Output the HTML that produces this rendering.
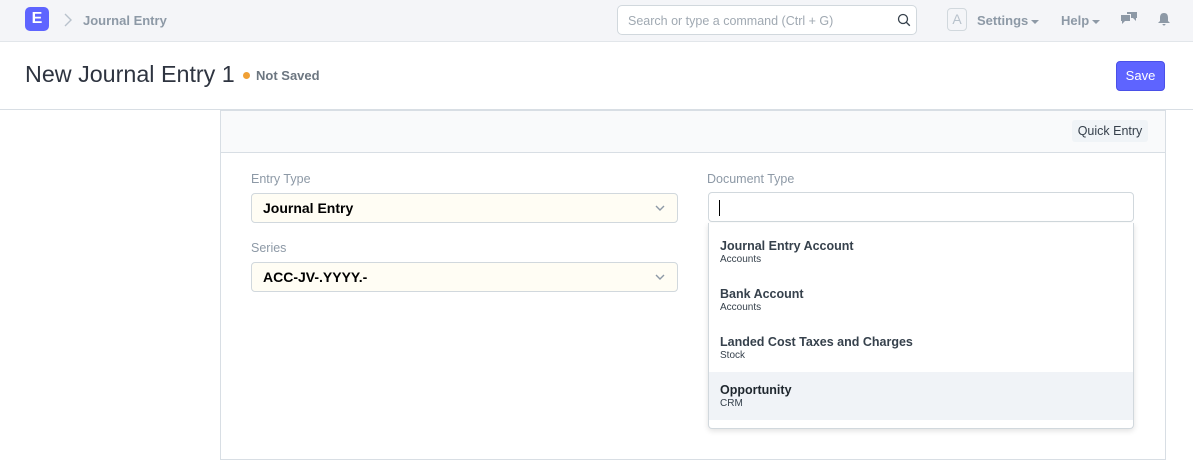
<!DOCTYPE html>
<html><head><style>
*{box-sizing:border-box;margin:0;padding:0}
body{width:1193px;height:467px;overflow:hidden;background:#fff;font-family:"Liberation Sans",sans-serif;position:relative;color:#1f272e}
.abs{position:absolute}
.nav{left:0;top:0;width:1193px;height:42px;background:#f4f5f8;border-bottom:1px solid #e2e6ea}
.logo{left:25px;top:7px;width:24px;height:24px;background:#5e64ff;border-radius:5px;color:#fff;font-weight:bold;font-size:16px;text-align:center;line-height:24px}
.gray{color:#8d99a6;font-weight:bold;font-size:13px}
.search{left:617px;top:5px;width:300px;height:30px;border:1px solid #d1d8dd;border-radius:5px;background:#fff;font-size:12.5px;color:#a0a9b2;padding:8px 10px}
.av{left:947px;top:8px;width:20px;height:23px;border:1px solid #d1d8dd;border-radius:4px;color:#b8c2cc;font-size:14px;text-align:center;line-height:21px}
.title{left:25px;top:61px;font-size:23.3px;color:#2e3440}
.save{left:1116px;top:61px;width:49px;height:30px;background:#5e64ff;border:1px solid #4a50e8;border-radius:4px;color:#fff;font-size:13px;text-align:center;line-height:28px}
.card{left:220px;top:110px;width:946px;height:350px;border:1px solid #d8dee4}
.lab{font-size:12.5px;color:#8d99a6}
.sel{width:427px;height:30px;background:#fffdf4;border:1px solid #d1d8dd;border-radius:4px;font-weight:bold;font-size:14px;color:#000;padding:6px 11px}
.chev{position:absolute;right:12px;top:9px}
.dd{left:708px;top:223px;width:426px;height:206px;background:#fff;border:1px solid #d1d8dd;border-top:none;border-radius:0 0 4px 4px;box-shadow:0 2px 6px rgba(0,0,0,.12);padding-top:5px}
.it{height:48px;padding:11px 11px 0;}
.it b{display:block;font-size:12.5px;color:#36414c}
.it span{display:block;font-size:10px;color:#36414c;margin-top:1px}
.car{display:inline-block;width:0;height:0;border-left:4px solid transparent;border-right:4px solid transparent;border-top:4px solid #8d99a6;vertical-align:middle;margin-left:3px}
</style></head><body>
<div class="abs nav"></div>
<div class="abs logo">E</div>
<svg class="abs" style="left:63px;top:13px" width="10" height="14"><path d="M2 1l6 6-6 6" stroke="#b8c2cc" stroke-width="1.4" fill="none"/></svg>
<div class="abs gray" style="left:83px;top:13px">Journal Entry</div>
<div class="abs search">Search or type a command (Ctrl + G)</div>
<svg class="abs" style="left:897px;top:13px" width="14" height="14"><circle cx="6" cy="6" r="4.5" stroke="#36414c" stroke-width="1.3" fill="none"/><path d="M9.3 9.3l3.5 3.5" stroke="#36414c" stroke-width="1.4"/></svg>
<div class="abs av">A</div>
<div class="abs gray" style="left:977px;top:13px">Settings<span class="car"></span></div>
<div class="abs gray" style="left:1061px;top:13px">Help<span class="car"></span></div>
<svg class="abs" style="left:1121px;top:12px" width="17" height="14"><path d="M0 3h9v6H4l-3 3V9H0z" fill="#8d99a6"/><path d="M6 0h10v6h-1v3l-3-3H10V2H6z" fill="#8d99a6"/></svg>
<svg class="abs" style="left:1158px;top:12px" width="12" height="14"><path d="M6 1c3 0 4 2 4 5v3l2 2H0l2-2V6c0-3 1-5 4-5z M4.5 12h3a1.5 1.5 0 0 1-3 0z" fill="#8d99a6"/></svg>
<div class="abs title">New Journal Entry 1</div>
<div class="abs" style="left:243px;top:72px;width:7px;height:7px;border-radius:50%;background:#f0a035"></div>
<div class="abs gray" style="left:256px;top:68px;color:#6c7680">Not Saved</div>
<div class="abs save">Save</div>
<div class="abs" style="left:0;top:109px;width:1193px;height:1px;background:#d8dee4"></div>
<div class="abs card"><div style="height:42px;background:#f9fafb;border-bottom:1px solid #d8dee4"></div></div>
<div class="abs" style="left:1072px;top:120px;width:76px;height:22px;background:#f0f4f7;border-radius:3px;font-size:12.5px;color:#36414c;text-align:center;line-height:22px">Quick Entry</div>
<div class="abs lab" style="left:251px;top:172px">Entry Type</div>
<div class="abs sel" style="left:251px;top:193px">Journal Entry<svg class="chev" width="10" height="10"><path d="M1 3l4 4 4-4" stroke="#8d99a6" stroke-width="1.4" fill="none"/></svg></div>
<div class="abs lab" style="left:251px;top:241px">Series</div>
<div class="abs sel" style="left:251px;top:262px">ACC-JV-.YYYY.-<svg class="chev" width="10" height="10"><path d="M1 3l4 4 4-4" stroke="#8d99a6" stroke-width="1.4" fill="none"/></svg></div>
<div class="abs lab" style="left:707px;top:172px">Document Type</div>
<div class="abs" style="left:708px;top:192px;width:426px;height:30px;border:1px solid #d1d8dd;border-radius:4px;background:#fff"><div style="position:absolute;left:10px;top:7px;width:1px;height:16px;background:#000"></div></div>
<div class="abs dd">
<div class="it"><b>Journal Entry Account</b><span>Accounts</span></div>
<div class="it"><b>Bank Account</b><span>Accounts</span></div>
<div class="it"><b>Landed Cost Taxes and Charges</b><span>Stock</span></div>
<div class="it" style="background:#f0f3f7"><b style="color:#1f272e">Opportunity</b><span>CRM</span></div>
</div>
</body></html>
